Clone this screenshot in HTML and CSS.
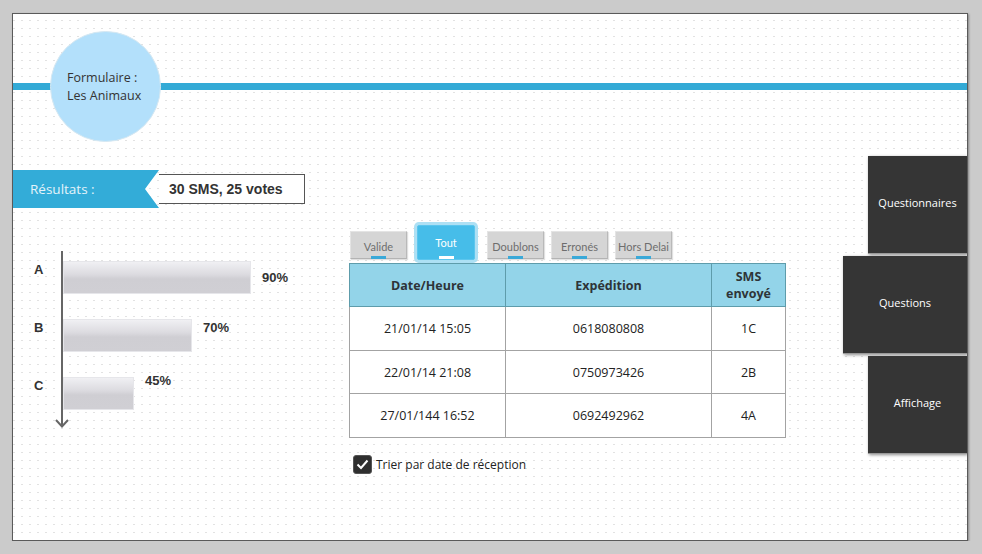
FILE: index.html
```html
<!DOCTYPE html>
<html lang="fr">
<head>
<meta charset="utf-8">
<title>Formulaire : Les Animaux</title>
<link rel="stylesheet" href="styles.css">
</head>
<body>
<div class="canvas">
  <header class="header">
    <div class="circle">
      <span>Formulaire :</span>
      <span>Les Animaux</span>
    </div>
  </header>
  <main class="main">
    <section class="left">
      <div class="results">
        <div class="banner">Résultats :</div>
        <div class="votes">30 SMS, 25 votes</div>
      </div>
      <div class="chart">
        <div class="bar-row row-a">
          <span class="lbl">A</span>
          <span class="bar" style="width:188px"></span>
          <span class="pct">90%</span>
        </div>
        <div class="bar-row row-b">
          <span class="lbl">B</span>
          <span class="bar" style="width:129px"></span>
          <span class="pct">70%</span>
        </div>
        <div class="bar-row row-c">
          <span class="lbl">C</span>
          <span class="bar" style="width:71px"></span>
          <span class="pct">45%</span>
        </div>
        <div class="axis-end">
          <svg width="14" height="9" viewBox="0 0 14 9"><path d="M1 1 L7 7.5 L13 1" fill="none" stroke="#666" stroke-width="2"/></svg>
        </div>
      </div>
    </section>
    <section class="center">
      <div class="tabs">
        <div class="tab">Valide<i></i></div>
        <div class="tab tab-active">Tout<i></i></div>
        <div class="tab">Doublons<i></i></div>
        <div class="tab">Erronés<i></i></div>
        <div class="tab">Hors Delai<i></i></div>
      </div>
      <table class="sms">
        <colgroup><col class="c1"><col class="c2"><col class="c3"></colgroup>
        <thead>
          <tr><th>Date/Heure</th><th>Expédition</th><th>SMS<br>envoyé</th></tr>
        </thead>
        <tbody>
          <tr class="r1"><td>21/01/14 15:05</td><td>0618080808</td><td>1C</td></tr>
          <tr class="r2"><td>22/01/14 21:08</td><td>0750973426</td><td>2B</td></tr>
          <tr class="r3"><td>27/01/144 16:52</td><td>0692492962</td><td>4A</td></tr>
        </tbody>
      </table>
      <label class="sort">
        <span class="check"><svg width="13" height="11" viewBox="0 0 13 11"><path d="M1.5 5.5 L5 9 L11.5 1.5" fill="none" stroke="#fff" stroke-width="2"/></svg></span>
        <span>Trier par date de réception</span>
      </label>
    </section>
    <nav class="right">
      <div class="btn">Questionnaires</div>
      <div class="btn btn-wide">Questions</div>
      <div class="btn">Affichage</div>
    </nav>
  </main>
</div>
</body>
</html>
```
FILE: styles.css
```css
* { box-sizing: border-box; }
html, body { margin: 0; }
body {
  background: #cbcbcb;
  padding: 13px 0 0 12px;
  font-family: "Open Sans", "DejaVu Sans", sans-serif;
  color: #333;
}
.canvas {
  width: 956px;
  height: 528px;
  border: 1px solid #5a5a5a;
  box-shadow: 1px 1px 2px rgba(0,0,0,0.35);
  background-color: #fff;
  background-image: radial-gradient(ellipse 0.7px 1.2px at 1px 1.5px, #e2e2e2 80%, transparent 100%);
  background-size: 8px 8px;
  background-position: 0 5px;
  overflow: hidden;
}
.header {
  margin-top: 17px;
  height: 111px;
  background: linear-gradient(#33aad6, #33aad6) 0 52px / 100% 7px no-repeat;
}
.circle {
  width: 111px;
  height: 111px;
  margin-left: 37px;
  border-radius: 50%;
  background: #b3e0fb;
  border: 1px solid #d6e8f2;
  display: flex;
  flex-direction: column;
  justify-content: center;
  padding-left: 16px;
  font-size: 12.5px;
  line-height: 18px;
  color: #333;
}
.main {
  display: flex;
  margin-top: 14px;
}
.left { width: 336px; margin-top: 14px; }
.results { display: flex; }
.banner {
  width: 146px;
  height: 38px;
  background: #33acd8;
  clip-path: polygon(0 0, 100% 0, calc(100% - 14px) 50%, 100% 100%, 0 100%);
  color: #e4f3fa;
  font-size: 13.5px;
  line-height: 38px;
  padding-left: 17px;
}
.votes {
  margin-top: 4px;
  width: 146px;
  height: 30px;
  border: 1px solid #555;
  border-left: none;
  background: #fff;
  font-family: "Liberation Sans", Arial, sans-serif;
  font-weight: bold;
  font-size: 14px;
  line-height: 28px;
  padding-left: 10px;
  color: #333;
}
.chart {
  margin-top: 43px;
  padding-top: 10px;
  background: linear-gradient(#666, #666) 48px 0 / 2px 175px no-repeat;
  font-family: "Liberation Sans", Arial, sans-serif;
  font-weight: bold;
  font-size: 13px;
  line-height: 15px;
  color: #333;
}
.bar-row {
  display: flex;
  align-items: flex-start;
  height: 33px;
  margin-bottom: 25px;
}
.row-c { margin-bottom: 0; }
.lbl {
  width: 48px;
  padding-left: 21px;
  margin-top: 1px;
}
.bar {
  height: 33px;
  margin-left: 2px;
  border: 1px solid #e6e6ea;
  background: linear-gradient(#f0f0f3 0%, #dcdbe0 40%, #cfced3 55%, #d0cfd4 100%);
}
.pct { margin-left: 11px; }
.row-a .pct { margin-top: 9px; }
.row-b .pct { margin-top: 1px; }
.row-c .pct { margin-top: -4px; }
.axis-end {
  height: 17px;
  padding-top: 9px;
  padding-left: 42px;
}
.axis-end svg { display: block; }
.center { width: 436px; margin-top: 69px; }
.tabs {
  display: flex;
  align-items: flex-end;
  gap: 7px;
  padding-left: 1px;
  height: 35px;
}
.tab {
  width: 57px;
  height: 28px;
  margin-bottom: 1px;
  background: #d5d5d5;
  border: 1px solid #e4e4e4;
  border-right-color: #b9b9b9;
  border-bottom-color: #b3b3b3;
  box-shadow: 1px 1px 1px rgba(0,0,0,0.12);
  font-family: "Lato", "Open Sans", sans-serif;
  font-size: 11px;
  color: #6e6e6e;
  text-align: center;
  padding-top: 8px;
  line-height: 13px;
  display: flex;
  flex-direction: column;
  align-items: center;
  white-space: nowrap;
}
.tab i {
  display: block;
  flex: none;
  width: 15px;
  height: 3px;
  margin-top: 3px;
  background: #3aa9d8;
}
.tab-active {
  width: 58px;
  height: 35px;
  margin: 0 5px 0 3px;
  background: #46bde9;
  border: 1px solid #5cc6ee;
  box-shadow: 0 0 0 3px #ade0f4;
  border-radius: 2px;
  color: #fff;
  padding-top: 10px;
}
.tab-active i { background: #fff; margin-top: 7px; }
.sms {
  margin-top: 3px;
  width: 436px;
  border-collapse: collapse;
  table-layout: fixed;
  font-size: 12.5px;
  color: #222;
}
.c1 { width: 156px; }
.c2 { width: 206px; }
.c3 { width: 74px; }
.sms th {
  height: 43px;
  background: #93d4e9;
  border: 1px solid #5e9cab;
  font-weight: bold;
  color: #2e3438;
  line-height: 17px;
  padding: 0;
}
.sms td {
  border: 1px solid #a3a3a3;
  background: #fff;
  text-align: center;
  padding: 0;
  height: 44px;
}
.sms .r2 td { height: 43px; }
.sort {
  display: flex;
  align-items: center;
  gap: 4px;
  margin-top: 17px;
  padding-left: 4px;
  font-size: 12px;
  color: #222;
}
.check {
  width: 19px;
  height: 19px;
  border-radius: 3px;
  background: #2f2f2f;
  border: 1px solid #555;
  display: flex;
  align-items: center;
  justify-content: center;
}
.check svg { display: block; }
.right {
  margin-left: auto;
  display: flex;
  flex-direction: column;
  align-items: flex-end;
  gap: 2px;
}
.btn {
  width: 99px;
  height: 98px;
  background: #353535;
  box-shadow: 1px 1px 3px rgba(0,0,0,0.45);
  border-bottom: 1px solid #9a9a9a;
  color: #fff;
  font-size: 11px;
  display: flex;
  align-items: center;
  justify-content: center;
  padding-bottom: 5px;
}
.btn-wide { width: 124px; }
```
